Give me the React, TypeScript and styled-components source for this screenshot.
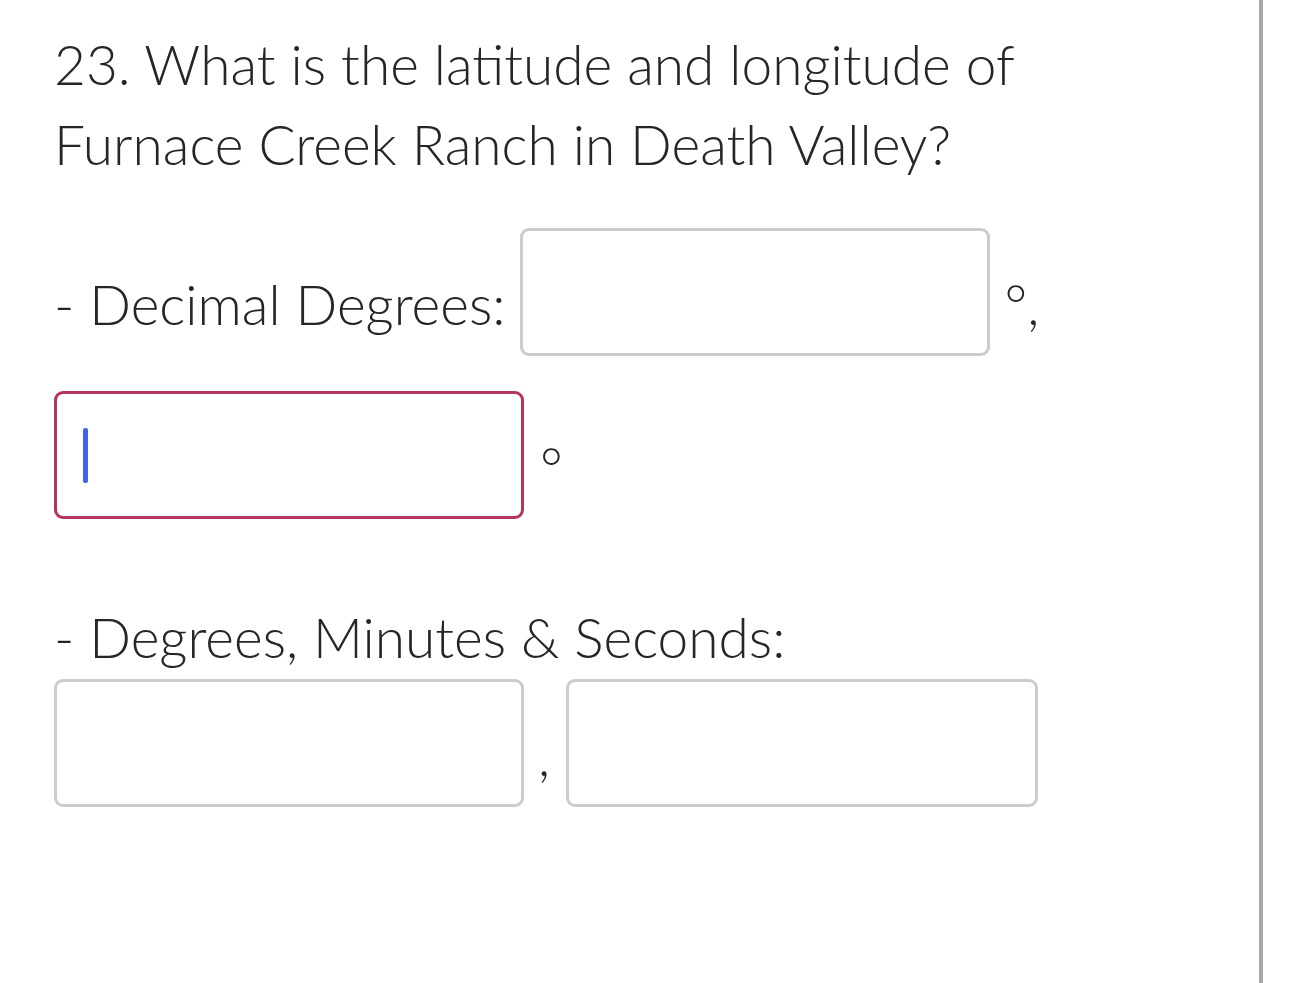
import styled, { createGlobalStyle } from "styled-components";

const GlobalStyle = createGlobalStyle`
    html, body {
        margin: 0;
        padding: 0;
        background: #ffffff;
    }
    body {
        font-family: "Lato Light", Lato, "Open Sans", "Liberation Sans", sans-serif;
        color: #262626;
    }
`;

const Page = styled.div`
    box-sizing: border-box;
    width: 1263px;
    min-height: 983px;
    padding: 24px 0 0 54px;
    border-right: 4px solid #a8a8a8;
    font-weight: 300;
`;

const Question = styled.h1`
    margin: 0;
    font-size: 55px;
    font-weight: 300;
    line-height: 80px;
    width: 1000px;
`;

const Row = styled.div<{ $top: number }>`
    display: flex;
    align-items: flex-end;
    margin-top: ${(p) => p.$top}px;
`;

const Label = styled.span`
    font-size: 55px;
    line-height: 80px;
    margin-bottom: 12px;
    white-space: pre;
`;

const Suffix = styled(Label)<{ $gap: number }>`
    margin-left: ${(p) => p.$gap}px;
`;

const Heading = styled.div<{ $top: number }>`
    font-size: 55px;
    line-height: 80px;
    margin-top: ${(p) => p.$top}px;
`;

const Field = styled.div<{ $width: number; $active?: boolean; $gap?: number }>`
    box-sizing: border-box;
    display: flex;
    align-items: center;
    width: ${(p) => p.$width}px;
    height: 128px;
    margin-left: ${(p) => p.$gap ?? 0}px;
    padding-left: 26px;
    border: 3px solid ${(p) => (p.$active ? "#b3345f" : "#cccccc")};
    border-radius: 9px;
    background: #ffffff;
`;

const Caret = styled.span`
    display: block;
    width: 5px;
    height: 55px;
    border-radius: 2px;
    background: #3f63ee;
`;

export default function App() {
    return (
        <>
            <GlobalStyle />
            <Page>
                <Question>
                    23. What is the latitude and longitude of Furnace Creek Ranch in Death Valley?
                </Question>

                <Row $top={44}>
                    <Label>- Decimal Degrees: </Label>
                    <Field $width={470} />
                    <Suffix $gap={14}>°,</Suffix>
                </Row>

                <Row $top={35}>
                    <Field $width={470} $active>
                        <Caret />
                    </Field>
                    <Suffix $gap={16}>°</Suffix>
                </Row>

                <Heading $top={78}>- Degrees, Minutes &amp; Seconds:</Heading>

                <Row $top={2}>
                    <Field $width={470} />
                    <Suffix $gap={14}>,</Suffix>
                    <Field $width={472} $gap={16} />
                </Row>
            </Page>
        </>
    );
}
